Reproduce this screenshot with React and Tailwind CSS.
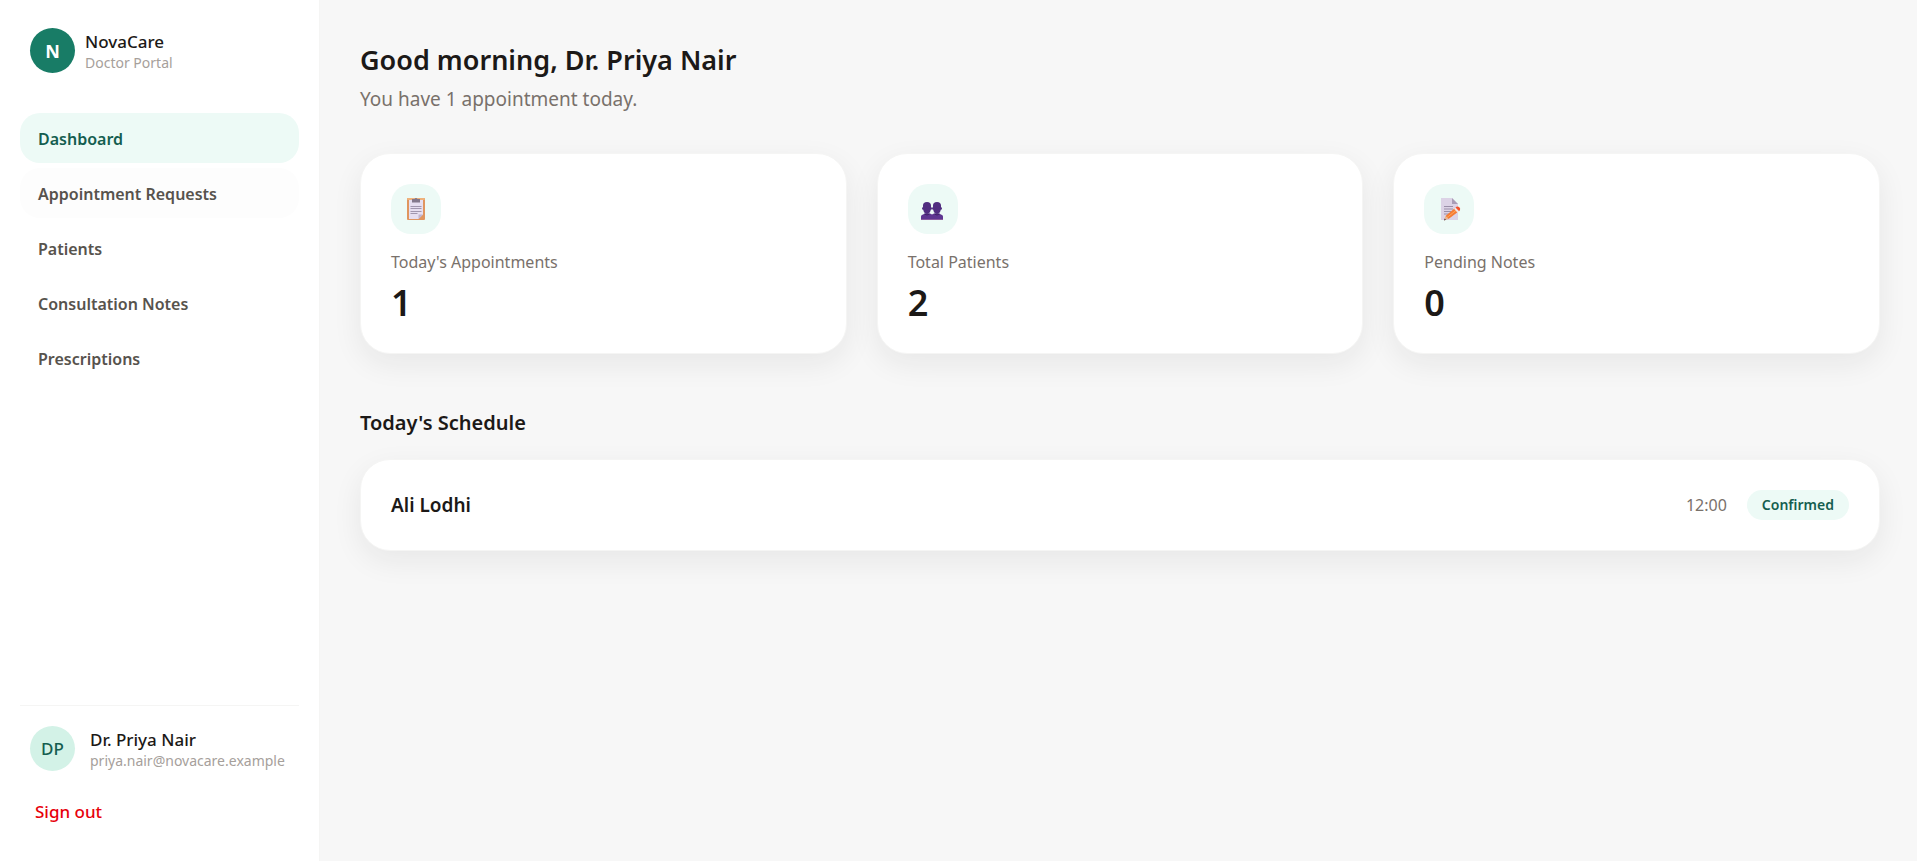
import React, { useState } from 'react';

const navItems = [
  'Dashboard',
  'Appointment Requests',
  'Patients',
  'Consultation Notes',
  'Prescriptions'
];

const appointments = [
  { id: 1, patient: 'Ali Lodhi', time: '12:00', status: 'Confirmed' }
];

const ClipboardIcon = () => (
  <svg viewBox="0 0 24 24" className="size-6" aria-hidden="true">
    <rect x="3" y="1" width="18" height="22" rx="1" fill="#e0955f" />
    <rect x="3" y="1" width="18" height="2" rx="1" fill="#efb27c" />
    <path d="M5 3h14v14.5L14.5 22H5z" fill="#e6def0" />
    <path d="M14.5 22v-4.5H19z" fill="#bfb2cd" />
    <path d="M8 2h2.6a1.5 1.5 0 0 1 2.8 0H16v3.5H8z" fill="#83788c" />
    <path d="M6.5 9.5h11M6.5 11.5h11M6.5 14.5h11M6.5 16.5h7" stroke="#a196ae" strokeWidth="1" />
  </svg>
);

const PeopleIcon = () => (
  <svg viewBox="0 0 24 24" className="size-6" aria-hidden="true">
    <g fill="#5e3590">
      <path d="M0 23v-3.5q0-1.5 2-2l2-1h5l2 1v5.5z" />
      <path d="M22 23v-3.5q0-1.5-2-2l-2-1h-5l-2 1v5.5z" />
    </g>
    <g fill="#512d80">
      <path d="M2 8.5C2 6.2 3.3 5 6 5s4 1.2 4 3.5v1.8q1 0 1 1.2t-1.2 1.3C9.3 15.5 8 17 6 17s-3.3-1.5-3.8-4.2Q1 12.7 1 11.5t1-1.2z" />
      <path d="M12 8.5C12 6.2 13.3 5 16 5s4 1.2 4 3.5v1.8q1 0 1 1.2t-1.2 1.3C19.3 15.5 18 17 16 17s-3.3-1.5-3.8-4.2Q11 12.7 11 11.5t1-1.2z" />
    </g>
    <path d="M3.5 17q2.5 2 5 0M13.5 17q2.5 2 5 0" stroke="#3d2065" fill="none" />
    <path d="M0 22.5h22" stroke="#8a5a9e" strokeWidth="1" />
  </svg>
);

const NoteIcon = () => (
  <svg viewBox="0 0 24 24" className="size-6" aria-hidden="true">
    <path d="M4 1h11l6 6v16H4z" fill="#dcd3e6" />
    <path d="M15 1l6 6h-6z" fill="#a99db6" />
    <path d="M7 9.5h9M7 12h9M7 14.5h7M7 17h5" stroke="#9a8fa8" strokeWidth="1" />
    <path d="M8.5 19L18 11l3.5 3.5L11.5 22z" fill="#f57c34" />
    <path d="M10 20.5L19.8 12.8" stroke="#ffa55c" strokeWidth="1" />
    <path d="M17 11.8l1.5-1.3 3.7 3.8-1.7 1.5z" fill="#f1e6e6" />
    <path d="M18.5 10.5l1-.8q1.5-.7 2.8.5t.7 2.8l-.9 1.2z" fill="#f4512c" />
    <path d="M8.5 19L7 23.5l4.5-1.5z" fill="#e8b48c" />
    <path d="M7.6 21.5L7 23.5l2-.7z" fill="#4a3a4e" />
  </svg>
);

const stats = [
  { label: "Today's Appointments", value: 1, icon: ClipboardIcon },
  { label: 'Total Patients', value: 2, icon: PeopleIcon },
  { label: 'Pending Notes', value: 0, icon: NoteIcon }
];

const Sidebar = () => {
  const [active, setActive] = useState('Dashboard');

  const getItemClass = (item) => {
    if (item === active) return 'bg-[#edfaf6] text-[#155e50]';
    if (item === 'Appointment Requests') return 'bg-[#fdfdfd] text-stone-600';
    return 'text-stone-600 hover:bg-[#fdfdfd]';
  };

  return (
    <aside className="flex w-80 shrink-0 flex-col border-r border-[#f5f5f4] bg-white px-5 pt-7 pb-[27px]">
      <div className="flex items-center gap-[10px] px-[10px]">
        <div className="flex size-[45px] items-center justify-center rounded-full bg-[#187c66] text-lg font-bold text-white">
          N
        </div>
        <div className="pt-[3px]">
          <p className="text-[17px] leading-[21px] font-medium text-stone-900">NovaCare</p>
          <p className="text-sm leading-[21px] text-stone-400">Doctor Portal</p>
        </div>
      </div>

      <nav className="mt-10 flex flex-col gap-[5px]">
        {navItems.map((item) => (
          <button
            key={item}
            type="button"
            onClick={() => setActive(item)}
            className={`h-[50px] rounded-[20px] px-[18px] pt-[2px] text-left text-base font-semibold ${getItemClass(item)}`}
          >
            {item}
          </button>
        ))}
      </nav>

      <div className="mt-auto border-t border-[#f5f5f4] pt-5">
        <div className="flex items-center gap-[15px] px-[10px]">
          <div className="flex size-[45px] shrink-0 items-center justify-center rounded-full bg-[#d3f2e7] text-[17px] font-medium text-[#155e50]">
            DP
          </div>
          <div className="pt-[3px]">
            <p className="text-[17px] leading-[21px] font-medium text-stone-900">Dr. Priya Nair</p>
            <p className="text-sm leading-[21px] text-stone-400">priya.nair@novacare.example</p>
          </div>
        </div>
        <button type="button" className="mt-[18px] h-[45px] px-[15px] text-[17px] font-medium text-[#e7000b]">
          Sign out
        </button>
      </div>
    </aside>
  );
};

const App = () => {
  return (
    <div className="flex min-h-screen bg-[#f7f7f7] font-['Noto_Sans','Open_Sans',sans-serif] text-stone-900">
      <Sidebar />
      <main className="min-w-0 flex-1 py-10 pr-[37px] pl-10">
        <h1 className="text-[27px] leading-10 font-semibold">Good morning, Dr. Priya Nair</h1>
        <p className="mt-1 text-[19px] leading-[30px] text-stone-500">You have 1 appointment today.</p>

        <div className="mt-[39px] grid grid-cols-3 gap-[30px]">
          {stats.map(({ label, value, icon: Icon }) => (
            <div
              key={label}
              className="rounded-[30px] border border-[#f5f5f4] bg-white p-[30px] shadow-[0_10px_30px_rgba(28,25,23,0.07)]"
            >
              <div className="flex size-[50px] items-center justify-center rounded-[20px] bg-[#edfaf6]">
                <Icon />
              </div>
              <p className="mt-4 text-base leading-6 text-stone-500">{label}</p>
              <p className="mt-2 text-4xl leading-[41px] font-semibold">{value}</p>
            </div>
          ))}
        </div>

        <section className="mt-[52px]">
          <h2 className="text-xl leading-[34px] font-semibold">Today's Schedule</h2>
          <ul className="mt-[19px] flex flex-col gap-5">
            {appointments.map((item) => (
              <li
                key={item.id}
                className="flex items-center justify-between rounded-[30px] border border-[#f5f5f4] bg-white p-[30px] shadow-[0_10px_30px_rgba(28,25,23,0.07)]"
              >
                <p className="text-[19px] leading-[30px] font-semibold">{item.patient}</p>
                <div className="flex items-center gap-5">
                  <span className="text-base text-stone-500">{item.time}</span>
                  <span className="rounded-full bg-[#edfaf6] px-[15px] text-sm leading-[30px] font-semibold text-[#155e50]">
                    {item.status}
                  </span>
                </div>
              </li>
            ))}
          </ul>
        </section>
      </main>
    </div>
  );
};

export default App;
